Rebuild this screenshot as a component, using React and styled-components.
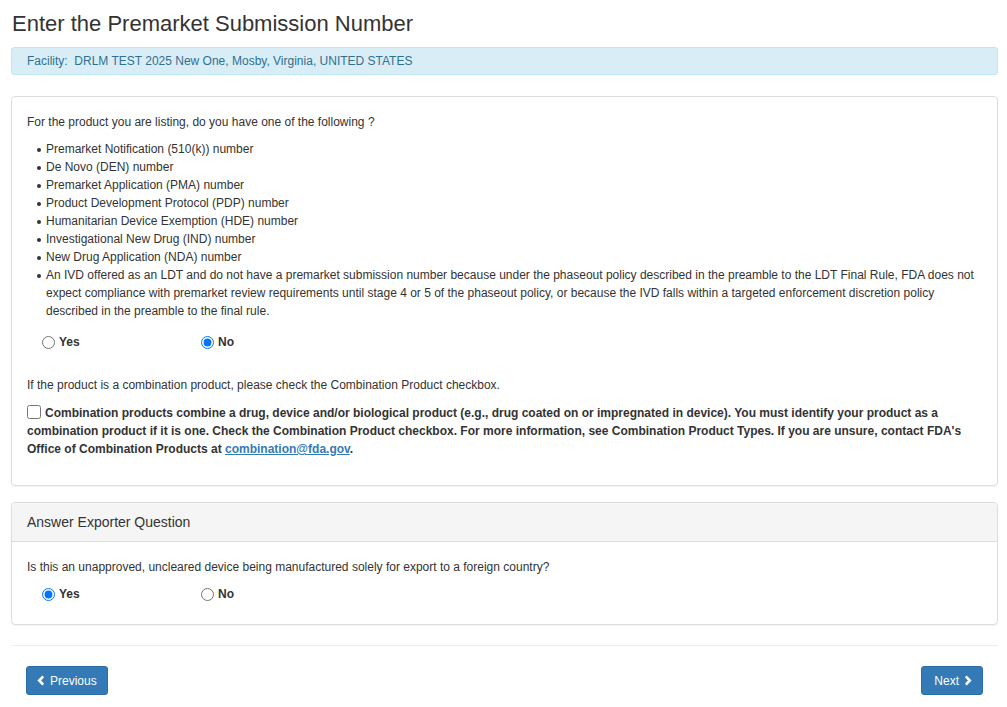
import React from "react";
import styled, { createGlobalStyle } from "styled-components";

const Global = createGlobalStyle`
  body {
    margin: 0;
    font-family: "Liberation Sans", Arial, sans-serif;
    font-size: 12px;
    line-height: 18px;
    color: #333;
    background: #fff;
  }
  * { box-sizing: border-box; }
`

//Page wrapper
const Page = styled.div`
  padding: 0 9px 0 11px;
`

//Heading
const Title = styled.h3`
  font-size: 22px;
  font-weight: 400;
  line-height: 26px;
  margin: 11px 0 10px 1px;
`

//Facility alert
const Alert = styled.div`
  background: #d9edf7;
  border: 1px solid #bce8f1;
  color: #31708f;
  border-radius: 3px;
  padding: 4px 15px;
  margin-bottom: 21px;
`

//Panel
const Panel = styled.div`
  border: 1px solid #ddd;
  border-radius: 4px;
  box-shadow: 0 1px 1px rgba(0,0,0,0.05);
  margin-bottom: 16px;
  overflow: hidden;
`

const PanelHead = styled.div`
  background: #f5f5f5;
  border-bottom: 1px solid #ddd;
  font-size: 14px;
  line-height: 20px;
  padding: 9px 15px 9px;
`

const PanelBody = styled.div`
  padding: 16px 15px ${p => p.$bottom || 15}px;
`

const P = styled.p`
  margin: 0 0 ${p => p.$mb ?? 9}px;
`

const List = styled.ul`
  margin: 0 0 13px;
  padding-left: 19px;
  list-style: none;
`

const Item = styled.li`
  position: relative;
  &::before {
    content: "";
    position: absolute;
    left: -9px;
    top: 8px;
    width: 4px;
    height: 4px;
    border-radius: 50%;
    background: #333;
  }
`

//Radio group
const Radios = styled.div`
  display: flex;
  padding-left: 15px;
  margin-bottom: ${p => p.$mb || 0}px;
`

const RadioLabel = styled.label`
  display: flex;
  align-items: center;
  width: 159px;
  font-weight: bold;
  height: 18px;

  input {
    margin: 0 4px 0 0;
    width: 13px;
    height: 13px;
  }
`

const CheckPara = styled.p`
  margin: 0 0 12px;
  font-weight: bold;
  line-height: 18px;

  input {
    margin: 0 4px 0 0;
    width: 14px;
    height: 14px;
    vertical-align: -2px;
  }

  a {
    color: #337ab7;
    text-decoration: underline;
  }
`

const Rule = styled.hr`
  border: 0;
  border-top: 1px solid #eee;
  margin: 20px 0 20px;
`

//Buttons
const Actions = styled.div`
  display: flex;
  justify-content: space-between;
  padding: 0 15px;
`

const Btn = styled.button`
  display: inline-flex;
  align-items: center;
  gap: 5px;
  height: 29px;
  padding: 0 ${p => p.$pr || 10}px 0 ${p => p.$pl || 10}px;
  background: #337ab7;
  border: 1px solid #2e6da4;
  border-radius: 3px;
  color: #fff;
  font-family: "Liberation Sans", Arial, sans-serif;
  font-size: 12px;
`

const Chevron = ({ dir }) => (
  <svg width="8" height="11" viewBox="0 0 8 11">
    <path
      d={dir === "left" ? "M6.2 1.4 L2.2 5.5 L6.2 9.6" : "M1.8 1.4 L5.8 5.5 L1.8 9.6"}
      fill="none"
      stroke="#fff"
      strokeWidth="2.6"
    />
  </svg>
)

const items = [
  "Premarket Notification (510(k)) number",
  "De Novo (DEN) number",
  "Premarket Application (PMA) number",
  "Product Development Protocol (PDP) number",
  "Humanitarian Device Exemption (HDE) number",
  "Investigational New Drug (IND) number",
  "New Drug Application (NDA) number",
  "An IVD offered as an LDT and do not have a premarket submission number because under the phaseout policy described in the preamble to the LDT Final Rule, FDA does not expect compliance with premarket review requirements until stage 4 or 5 of the phaseout policy, or because the IVD falls within a targeted enforcement discretion policy described in the preamble to the final rule.",
]

const App = () => {
  return (
    <>
      <Global />
      <Page>
        <Title>Enter the Premarket Submission Number</Title>
        <Alert>Facility:&nbsp; DRLM TEST 2025 New One, Mosby, Virginia, UNITED STATES</Alert>

        <Panel>
          <PanelBody $bottom={15}>
            <P>For the product you are listing, do you have one of the following ?</P>
            <List>
              {items.map((t, i) => <Item key={i}>{t}</Item>)}
            </List>
            <Radios $mb={25}>
              <RadioLabel><input type="radio" name="pm" />Yes</RadioLabel>
              <RadioLabel><input type="radio" name="pm" defaultChecked />No</RadioLabel>
            </Radios>
            <P $mb={10}>If the product is a combination product, please check the Combination Product checkbox.</P>
            <CheckPara>
              <input type="checkbox" />
              Combination products combine a drug, device and/or biological product (e.g., drug coated on or impregnated in device). You must identify your product as a combination product if it is one. Check the Combination Product checkbox. For more information, see Combination Product Types. If you are unsure, contact FDA's Office of Combination Products at <a href="#">combination@fda.gov</a>.
            </CheckPara>
          </PanelBody>
        </Panel>

        <Panel>
          <PanelHead>Answer Exporter Question</PanelHead>
          <PanelBody $bottom={21}>
            <P>Is this an unapproved, uncleared device being manufactured solely for export to a foreign country?</P>
            <Radios>
              <RadioLabel><input type="radio" name="ex" defaultChecked />Yes</RadioLabel>
              <RadioLabel><input type="radio" name="ex" />No</RadioLabel>
            </Radios>
          </PanelBody>
        </Panel>

        <Rule />

        <Actions>
          <Btn><Chevron dir="left" />Previous</Btn>
          <Btn $pl={12} $pr={10}>Next<Chevron dir="right" /></Btn>
        </Actions>
      </Page>
    </>
  )
}

export default App;
